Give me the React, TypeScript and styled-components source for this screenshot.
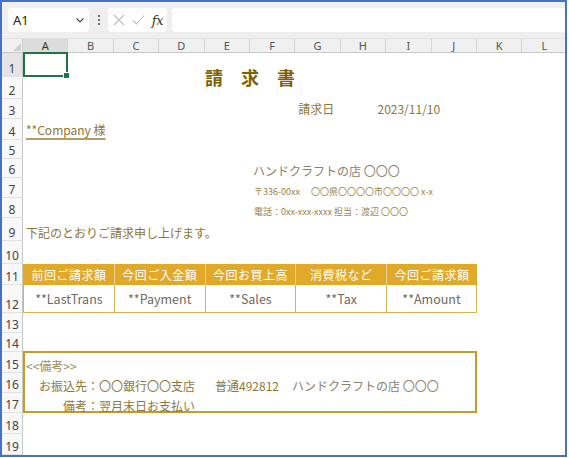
import React from "react";
import styled, { createGlobalStyle } from "styled-components";

const GlobalStyle = createGlobalStyle`
  html, body {
    margin: 0;
    padding: 0;
    background: #fff;
  }
  body {
    font-family: "Noto Sans", "Noto Sans CJK JP", sans-serif;
  }
`;

const COLUMNS = ["A", "B", "C", "D", "E", "F", "G", "H", "I", "J", "K", "L"];
const ROW_HEIGHTS = [24, 22, 20, 21, 19, 19, 20, 20, 23, 23, 21, 28, 20, 19, 21, 20, 20, 21, 21];

const Frame = styled.div`
  width: 567px;
  height: 457px;
  box-sizing: border-box;
  border: 2px solid #4472c4;
  display: flex;
  flex-direction: column;
  overflow: hidden;
  background: #fff;
`;

const FormulaBar = styled.div`
  flex: none;
  height: 37px;
  box-sizing: border-box;
  padding: 6px 0 0 6px;
  background: #efefef;
  border-bottom: 1px solid #e2e2e2;
  display: flex;
  align-items: flex-start;
`;

const NameBox = styled.div`
  width: 81px;
  height: 24px;
  box-sizing: border-box;
  padding: 0 4px 0 5px;
  background: #fff;
  border-radius: 4px;
  display: flex;
  align-items: center;
  justify-content: space-between;
  font-size: 13px;
  color: #222;
`;

const Grip = styled.div`
  width: 19px;
  height: 24px;
  display: flex;
  align-items: center;
  justify-content: center;
`;

const FxBox = styled.div`
  width: 59px;
  height: 24px;
  box-sizing: border-box;
  padding: 0 4px 0 5px;
  background: #fff;
  border-radius: 4px;
  display: flex;
  align-items: center;
  justify-content: space-between;
`;

const FxLabel = styled.span`
  font-family: "DejaVu Serif", "Liberation Serif", serif;
  font-style: italic;
  font-size: 13px;
  color: #333;
  letter-spacing: -0.5px;
`;

const FormulaInput = styled.div`
  flex: 1;
  height: 24px;
  margin-left: 5px;
  background: #fff;
  border-radius: 4px 0 0 4px;
`;

const Sheet = styled.div`
  flex: 1;
  display: grid;
  grid-template-columns: 21px repeat(12, 45.4px);
  grid-template-rows: 14px ${ROW_HEIGHTS.map((h) => `${h}px`).join(" ")};
  font-family: "Noto Sans CJK JP", "Noto Sans", sans-serif;
`;

const Corner = styled.div`
  grid-row: 1;
  grid-column: 1;
  background: #f0f0f0;
  border-right: 1px solid #d0d0d0;
  border-bottom: 1px solid #c8c8c8;
  display: flex;
  align-items: flex-end;
  justify-content: flex-end;
  padding: 0 1px 1px 0;
`;

const ColHeader = styled.div<{ $col: number; $selected?: boolean }>`
  grid-row: 1;
  grid-column: ${(p) => p.$col + 1};
  background: ${(p) => (p.$selected ? "#dcdcdc" : "#f0f0f0")};
  border-right: 1px solid #d6d6d6;
  border-bottom: 1px solid #c8c8c8;
  display: flex;
  align-items: center;
  justify-content: center;
  font-family: "Noto Sans", sans-serif;
  font-size: 11px;
  line-height: 12px;
  color: ${(p) => (p.$selected ? "#333" : "#555")};
`;

const RowHeader = styled.div<{ $row: number; $selected?: boolean }>`
  grid-column: 1;
  grid-row: ${(p) => p.$row + 1};
  background: ${(p) => (p.$selected ? "#e4e4e4" : "#f8f8f8")};
  border-right: 1px solid #c8c8c8;
  border-bottom: 1px solid #e2e2e2;
  display: flex;
  align-items: flex-end;
  justify-content: center;
  font-family: "Noto Sans", sans-serif;
  font-size: 12px;
  line-height: 14px;
  color: #444;
`;

const Cell = styled.div<{ $col: number; $span?: number; $row: number; $rows?: number }>`
  grid-column: ${(p) => p.$col + 1} / span ${(p) => p.$span ?? 1};
  grid-row: ${(p) => p.$row + 1} / span ${(p) => p.$rows ?? 1};
  display: flex;
  align-items: flex-end;
  white-space: nowrap;
  min-width: 0;
`;

const ActiveCell = styled(Cell)`
  position: relative;
  margin: -1px 0 0 0;
  border: 2px solid #217346;
  z-index: 2;
`;

const FillHandle = styled.span`
  position: absolute;
  right: -4px;
  bottom: -4px;
  width: 5px;
  height: 5px;
  background: #217346;
  border: 1px solid #fff;
`;

const Title = styled(Cell)`
  align-items: center;
  justify-content: center;
  padding-top: 1px;
  font-size: 18px;
  font-weight: 700;
  color: #7f6000;
  line-height: 20px;
`;

const InfoText = styled(Cell)<{ $center?: boolean }>`
  align-items: center;
  justify-content: ${(p) => (p.$center ? "center" : "flex-start")};
  padding-left: ${(p) => (p.$center ? 0 : 3)}px;
  font-size: 12px;
  line-height: 14px;
  color: #8e7638;
`;

const Company = styled(Cell)`
  align-items: center;
  padding-left: 3px;
  font-size: 12px;
  line-height: 15px;
  color: #8e7638;
  text-decoration: underline;
  text-decoration-thickness: 2px;
  text-underline-offset: 3px;
  text-decoration-color: #b49c62;
`;

const ShopName = styled(Cell)`
  padding-left: 3px;
  font-size: 12px;
  line-height: 14px;
  color: #8a8070;
`;

const SmallLine = styled(Cell)`
  padding-left: 4px;
  font-size: 9px;
  line-height: 12px;
  color: #9e8445;
`;

const Greeting = styled(Cell)`
  padding: 0 0 1px 3px;
  font-size: 12px;
  line-height: 14px;
  color: #8e7638;
`;

const InvoiceTable = styled(Cell)`
  display: grid;
  grid-template-columns: repeat(5, 1fr);
  grid-template-rows: 21px 28px;
  align-items: stretch;
`;

const HeadCell = styled.div<{ $first?: boolean }>`
  background: #e1a92a;
  border-left: 1px solid ${(p) => (p.$first ? "#e1a92a" : "#f0d290")};
  display: flex;
  align-items: center;
  justify-content: center;
  font-size: 12px;
  line-height: 14px;
  color: #fff;
  letter-spacing: 0.5px;
`;

const BodyCell = styled.div`
  background: #fff;
  border-left: 1px solid #d8b450;
  border-bottom: 1px solid #d8b450;
  display: flex;
  align-items: center;
  justify-content: center;
  font-size: 12.5px;
  line-height: 14px;
  color: #6e6a60;
  &:last-child {
    border-right: 1px solid #d8b450;
  }
`;

const RemarksBox = styled(Cell)`
  margin-top: -1px;
  border: 2px solid #c59c2c;
  display: grid;
  grid-template-rows: 20px 20px 20px;
  align-items: end;
`;

const RemarkLine = styled.div`
  display: flex;
  align-items: flex-end;
  font-size: 12px;
  line-height: 14px;
  color: #8e7638;
  white-space: nowrap;
`;

const RemarkHeading = styled(RemarkLine)`
  padding-left: 1px;
  color: #a08b58;
`;

const RemarkLabel = styled.span`
  width: 74px;
  flex: none;
  text-align: right;
`;

const RemarkValue = styled.span<{ $gap?: number; $muted?: boolean }>`
  margin-left: ${(p) => p.$gap ?? 0}px;
  color: ${(p) => (p.$muted ? "#8a8070" : "inherit")};
`;

const HEADERS = ["前回ご請求額", "今回ご入金額", "今回お買上高", "消費税など", "今回ご請求額"];
const VALUES = ["**LastTrans", "**Payment", "**Sales", "**Tax", "**Amount"];

function ChevronDown() {
  return (
    <svg width="10" height="10" viewBox="0 0 10 10">
      <path d="M1.5 3.5 L5 7 L8.5 3.5" fill="none" stroke="#444" strokeWidth="1.1" />
    </svg>
  );
}

function GripDots() {
  return (
    <svg width="4" height="12" viewBox="0 0 4 12">
      <circle cx="2" cy="2" r="1.1" fill="#555" />
      <circle cx="2" cy="6" r="1.1" fill="#555" />
      <circle cx="2" cy="10" r="1.1" fill="#555" />
    </svg>
  );
}

function CancelIcon() {
  return (
    <svg width="12" height="12" viewBox="0 0 12 12">
      <path d="M1 1 L11 11 M11 1 L1 11" stroke="#bdbdbd" strokeWidth="1.1" fill="none" />
    </svg>
  );
}

function CheckIcon() {
  return (
    <svg width="13" height="12" viewBox="0 0 13 12">
      <path d="M1 6.5 L4.5 10 L12 1.5" stroke="#bdbdbd" strokeWidth="1.1" fill="none" />
    </svg>
  );
}

function CornerMark() {
  return (
    <svg width="8" height="8" viewBox="0 0 8 8">
      <path d="M8 0 L8 8 L0 8 Z" fill="#cfcfcf" />
    </svg>
  );
}

export default function App() {
  return (
    <>
      <GlobalStyle />
      <Frame>
        <FormulaBar>
          <NameBox>
            <span>A1</span>
            <ChevronDown />
          </NameBox>
          <Grip>
            <GripDots />
          </Grip>
          <FxBox>
            <CancelIcon />
            <CheckIcon />
            <FxLabel>fx</FxLabel>
          </FxBox>
          <FormulaInput />
        </FormulaBar>

        <Sheet>
          <Corner>
            <CornerMark />
          </Corner>
          {COLUMNS.map((c, i) => (
            <ColHeader key={c} $col={i + 1} $selected={i === 0}>
              {c}
            </ColHeader>
          ))}
          {ROW_HEIGHTS.map((_, i) => (
            <RowHeader key={i} $row={i + 1} $selected={i === 0}>
              {i + 1}
            </RowHeader>
          ))}

          <Title $col={1} $span={10} $row={1} $rows={2}>
            請　求　書
          </Title>
          <ActiveCell $col={1} $row={1}>
            <FillHandle />
          </ActiveCell>

          <InfoText $col={7} $row={3}>
            請求日
          </InfoText>
          <InfoText $col={8} $span={3} $row={3} $center>
            2023/11/10
          </InfoText>

          <Company $col={1} $span={3} $row={4}>
            **Company 様
          </Company>

          <ShopName $col={6} $span={4} $row={6}>
            ハンドクラフトの店 〇〇〇
          </ShopName>
          <SmallLine $col={6} $span={5} $row={7}>
            〒336-00xx　 〇〇県〇〇〇〇市〇〇〇〇 x-x
          </SmallLine>
          <SmallLine $col={6} $span={5} $row={8}>
            電話：0xx-xxx-xxxx 担当：渡辺 〇〇〇
          </SmallLine>

          <Greeting $col={1} $span={5} $row={9}>
            下記のとおりご請求申し上げます。
          </Greeting>

          <InvoiceTable $col={1} $span={10} $row={11} $rows={2}>
            {HEADERS.map((h, i) => (
              <HeadCell key={h + i} $first={i === 0}>
                {h}
              </HeadCell>
            ))}
            {VALUES.map((v) => (
              <BodyCell key={v}>{v}</BodyCell>
            ))}
          </InvoiceTable>

          <RemarksBox $col={1} $span={10} $row={15} $rows={3}>
            <RemarkHeading>&lt;&lt;備考&gt;&gt;</RemarkHeading>
            <RemarkLine>
              <RemarkLabel>お振込先：</RemarkLabel>
              <RemarkValue>〇〇銀行〇〇支店</RemarkValue>
              <RemarkValue $gap={20}>普通492812</RemarkValue>
              <RemarkValue $gap={13} $muted>
                ハンドクラフトの店 〇〇〇
              </RemarkValue>
            </RemarkLine>
            <RemarkLine>
              <RemarkLabel>備考：</RemarkLabel>
              <RemarkValue>翌月末日お支払い</RemarkValue>
            </RemarkLine>
          </RemarksBox>
        </Sheet>
      </Frame>
    </>
  );
}
